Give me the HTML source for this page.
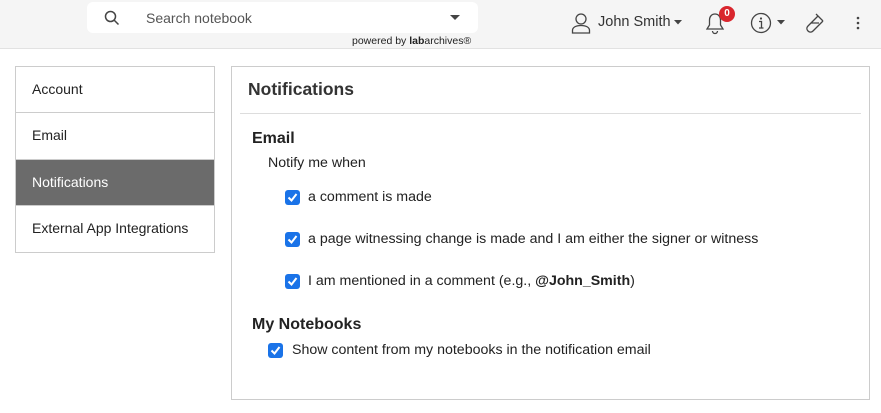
<!DOCTYPE html>
<html><head><style>
*{box-sizing:border-box;margin:0;padding:0}
body{width:881px;height:413px;background:#fff;font-family:"Liberation Sans",sans-serif;color:#222;position:relative;overflow:hidden}
.hdr{position:absolute;left:0;top:0;width:881px;height:49px;background:#f5f5f5;border-bottom:1px solid #e2e2e2}
.search{position:absolute;left:87px;top:2px;width:391px;height:31px;background:#fff;border-radius:6px}
.a{position:absolute;white-space:nowrap}
.side{position:absolute;left:15px;top:66px;width:200px;border:1px solid #ccc}
.side div{height:46.3px;line-height:45px;padding-left:16px;font-size:14px;border-bottom:1px solid #ccc}
.side div:last-child{border-bottom:none}
.side .act{background:#6b6b6b;color:#fff}
.main{position:absolute;left:231px;top:66px;width:639px;height:334px;border:1px solid #ccc}
.cb{position:absolute;width:15px;height:15px;background:#1a73e8;border-radius:3px}
.cb svg{position:absolute;left:2px;top:2px}
.t{font-size:14.2px}
</style></head><body>
<div class="hdr">
 <div class="search"></div>
 <svg class="a" style="left:104px;top:10px" width="16" height="16" viewBox="0 0 16 16"><circle cx="6.5" cy="6.5" r="5" fill="none" stroke="#444" stroke-width="1.5"/><path d="M10 10l4.5 4.5" stroke="#444" stroke-width="1.5"/></svg>
 <div class="a" style="left:146px;top:10px;font-size:14px;color:#555">Search notebook</div>
 <svg class="a" style="left:450px;top:15px" width="10" height="6"><path d="M0 0h10L5 5z" fill="#444"/></svg>
 <div class="a" style="left:352px;top:35px;font-size:10.5px;color:#222">powered by <b>lab</b>archives®</div>
 <svg class="a" style="left:571px;top:12px" width="20" height="22" viewBox="0 0 20 22"><circle cx="10" cy="7" r="5" fill="none" stroke="#444" stroke-width="1.3"/><path d="M1.5 21v-2.5c0-3 3-5 8.5-5s8.5 2 8.5 5V21z" fill="none" stroke="#444" stroke-width="1.3"/></svg>
 <div class="a" style="left:598px;top:14px;font-size:14.5px;color:#333">John Smith</div>
 <svg class="a" style="left:674px;top:20px" width="8" height="5"><path d="M0 0h8L4 4.5z" fill="#444"/></svg>
 <svg class="a" style="left:705px;top:12px" width="20" height="23" viewBox="0 0 20 23"><path d="M10 2c-3.5 0-5.5 2.8-5.5 6v5L2 17h16l-2.5-4V8c0-3.2-2-6-5.5-6z M7.5 19a2.5 2.5 0 0 0 5 0" fill="none" stroke="#444" stroke-width="1.3"/></svg>
 <div class="a" style="left:719px;top:6px;width:16px;height:16px;border-radius:8px;background:#d9262e;color:#fff;font-size:10px;font-weight:bold;text-align:center;line-height:16px">0</div>
 <svg class="a" style="left:750px;top:12px" width="22" height="22" viewBox="0 0 22 22"><circle cx="11" cy="11" r="9.5" fill="none" stroke="#444" stroke-width="1.3"/><circle cx="11" cy="6.5" r="1.1" fill="#444"/><path d="M9 9.5h2.5V16M9 16h4.5" fill="none" stroke="#444" stroke-width="1.3"/></svg>
 <svg class="a" style="left:777px;top:20px" width="8" height="5"><path d="M0 0h8L4 4.5z" fill="#444"/></svg>
 <svg class="a" style="left:803px;top:12px" width="22" height="22" viewBox="0 0 22 22"><path d="M13 2l7 7M15 4L5 14c-1.5 1.5-1.5 3.5 0 5s3.5 1.5 5 0L20 9M8 11h8" fill="none" stroke="#444" stroke-width="1.3"/></svg>
 <svg class="a" style="left:856px;top:16px" width="4" height="16"><circle cx="2" cy="2" r="1.3" fill="#444"/><circle cx="2" cy="7" r="1.3" fill="#444"/><circle cx="2" cy="12" r="1.3" fill="#444"/></svg>
</div>
<div class="side"><div>Account</div><div>Email</div><div class="act">Notifications</div><div>External App Integrations</div></div>
<div class="main"></div>
<div class="a" style="left:248px;top:79px;font-size:17.5px;font-weight:bold;color:#333">Notifications</div>
<div class="a" style="left:240px;top:113px;width:621px;height:1px;background:#ddd"></div>
<div class="a" style="left:252px;top:130px;font-size:16px;font-weight:bold;color:#222">Email</div>
<div class="a t" style="left:268px;top:155px">Notify me when</div>
<div class="cb" style="left:285px;top:190px"><svg width="11" height="11"><path d="M1.5 5.5l3 3 5-6.5" fill="none" stroke="#fff" stroke-width="2"/></svg></div>
<div class="a t" style="left:308px;top:189px">a comment is made</div>
<div class="cb" style="left:285px;top:232px"><svg width="11" height="11"><path d="M1.5 5.5l3 3 5-6.5" fill="none" stroke="#fff" stroke-width="2"/></svg></div>
<div class="a t" style="left:308px;top:231px">a page witnessing change is made and I am either the signer or witness</div>
<div class="cb" style="left:285px;top:274px"><svg width="11" height="11"><path d="M1.5 5.5l3 3 5-6.5" fill="none" stroke="#fff" stroke-width="2"/></svg></div>
<div class="a t" style="left:308px;top:273px">I am mentioned in a comment (e.g., <b>@John_Smith</b>)</div>
<div class="a" style="left:252px;top:316px;font-size:16px;font-weight:bold;color:#222">My Notebooks</div>
<div class="cb" style="left:268px;top:343px"><svg width="11" height="11"><path d="M1.5 5.5l3 3 5-6.5" fill="none" stroke="#fff" stroke-width="2"/></svg></div>
<div class="a t" style="left:292px;top:342px">Show content from my notebooks in the notification email</div>
</body></html>
